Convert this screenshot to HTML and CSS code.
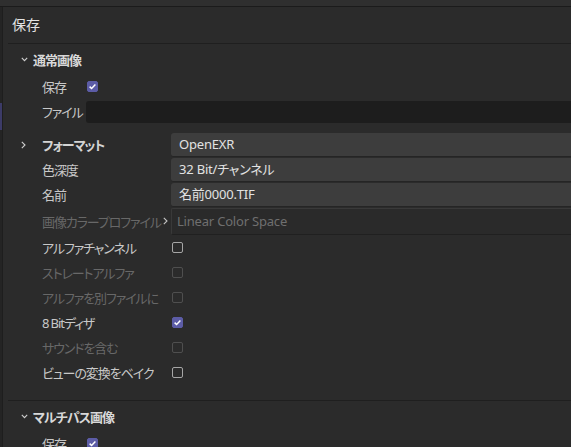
FILE: index.html
```html
<!DOCTYPE html>
<html lang="ja">
<head>
<meta charset="utf-8">
<title>保存</title>
<link rel="stylesheet" href="styles.css">
</head>
<body>
<div class="top"></div>
<div class="main">
  <div class="rail"><div class="rail-mark"></div></div>
  <div class="panel">
    <div class="title">保存</div>

    <section class="group">
      <div class="ghead">
        <svg class="chev-down" width="7" height="5" viewBox="0 0 7 5"><polyline points="0.8,0.8 3.5,3.6 6.2,0.8" fill="none" stroke="#cfcfcf" stroke-width="1.1"/></svg>
        <span>通常画像</span>
      </div>
      <div class="rows narrow">
        <div class="row"><span class="ind"></span><span class="label">保存</span><span class="cb on"><svg width="11" height="11" viewBox="0 0 11 11"><polyline points="2.6,5.6 4.6,7.5 8.4,3.6" fill="none" stroke="#fff" stroke-width="1.5"/></svg></span></div>
        <div class="row"><span class="ind"></span><span class="label">ファイル</span><span class="input"></span></div>
      </div>
      <div class="rows wide">
        <div class="row"><span class="ind"><svg width="5" height="8" viewBox="0 0 5 8"><polyline points="0.8,0.8 4,4 0.8,7.2" fill="none" stroke="#d0d0d0" stroke-width="1.1"/></svg></span><span class="label strong">フォーマット</span><span class="field">OpenEXR</span></div>
        <div class="row"><span class="ind"></span><span class="label">色深度</span><span class="field">32 Bit/チャンネル</span></div>
        <div class="row"><span class="ind"></span><span class="label">名前</span><span class="field">名前0000.TIF</span></div>
        <div class="row tall"><span class="ind"></span><span class="label dis">画像カラープロファイル<svg class="tick" width="5" height="8" viewBox="0 0 5 8"><polyline points="0.8,0.8 4,4 0.8,7.2" fill="none" stroke="#c4c4c4" stroke-width="1.1"/></svg></span><span class="field ghost">Linear Color Space</span></div>
        <div class="row"><span class="ind"></span><span class="label">アルファチャンネル</span><span class="cb"></span></div>
        <div class="row"><span class="ind"></span><span class="label dis">ストレートアルファ</span><span class="cb dis"></span></div>
        <div class="row"><span class="ind"></span><span class="label dis">アルファを別ファイルに</span><span class="cb dis"></span></div>
        <div class="row"><span class="ind"></span><span class="label">8 Bitディザ</span><span class="cb on"><svg width="11" height="11" viewBox="0 0 11 11"><polyline points="2.6,5.6 4.6,7.5 8.4,3.6" fill="none" stroke="#fff" stroke-width="1.5"/></svg></span></div>
        <div class="row"><span class="ind"></span><span class="label dis">サウンドを含む</span><span class="cb dis"></span></div>
        <div class="row"><span class="ind"></span><span class="label">ビューの変換をベイク</span><span class="cb"></span></div>
      </div>
    </section>

    <section class="group">
      <div class="ghead">
        <svg class="chev-down" width="7" height="5" viewBox="0 0 7 5"><polyline points="0.8,0.8 3.5,3.6 6.2,0.8" fill="none" stroke="#cfcfcf" stroke-width="1.1"/></svg>
        <span>マルチパス画像</span>
      </div>
      <div class="rows narrow">
        <div class="row"><span class="ind"></span><span class="label">保存</span><span class="cb on"><svg width="11" height="11" viewBox="0 0 11 11"><polyline points="2.6,5.6 4.6,7.5 8.4,3.6" fill="none" stroke="#fff" stroke-width="1.5"/></svg></span></div>
      </div>
    </section>
  </div>
</div>
</body>
</html>
```

FILE: styles.css
```css
html, body {
  margin: 0;
  padding: 0;
}
body {
  width: 571px;
  height: 447px;
  overflow: hidden;
  background: #2b2b2b;
  color: #c8c8c8;
  font-family: "Noto Sans", "Noto Sans CJK JP", sans-serif;
  font-size: 13px;
  font-feature-settings: "palt";
}
.top {
  height: 6px;
  background: #2f2f2f;
  border-bottom: 1px solid #1b1b1b;
}
.main {
  display: flex;
  height: 440px;
  overflow: hidden;
}
.rail {
  width: 2px;
  background: #242424;
  border-right: 1px solid #1e1e1e;
  position: relative;
  flex: none;
}
.rail-mark {
  position: absolute;
  left: 0;
  top: 96px;
  width: 2px;
  height: 27px;
  background: #3c3b68;
}
.panel {
  flex: 1;
  margin-left: 5px;
  min-width: 0;
}
.title {
  height: 36px;
  line-height: 36px;
  padding-left: 4px;
  font-size: 14px;
  color: #e4e4e4;
}
.group {
  border-top: 1px solid #1f1f1f;
  padding-bottom: 15px;
}
.ghead {
  height: 30px;
  display: flex;
  align-items: center;
  padding-left: 13px;
  font-weight: bold;
  color: #d8d8d8;
  letter-spacing: -1px;
}
.chev-down {
  margin-right: 5px;
  margin-top: 1px;
}
.rows {
  display: flex;
  flex-direction: column;
}
.wide {
  margin-top: 8px;
}
.row {
  height: 25px;
  display: flex;
  align-items: center;
}
.row.tall {
  height: 28px;
}
.ind {
  width: 34px;
  flex: none;
  display: flex;
  padding-left: 13px;
  box-sizing: border-box;
}
.label {
  flex: none;
  white-space: nowrap;
  display: flex;
  align-items: center;
  letter-spacing: -1.1px;
}
.narrow .label { width: 44px; }
.wide .label { width: 129px; }
.label.strong {
  font-weight: bold;
  color: #d4d4d4;
}
.label.dis { color: #686868; }
.tick {
  margin-left: auto;
  margin-right: 3px;
}
.cb {
  width: 9px;
  height: 9px;
  margin-left: 1px;
  border: 1.5px solid #a6a6a6;
  border-radius: 2px;
  flex: none;
  position: relative;
}
.cb.dis { border-color: #4f4f4f; }
.cb.on {
  background: #5c5ca6;
  border-color: #5c5ca6;
}
.cb.on svg {
  position: absolute;
  left: -1px;
  top: -1px;
}
.input {
  flex: 1;
  height: 22px;
  background: #1d1d1d;
  border-radius: 3px 0 0 3px;
}
.field {
  flex: 1;
  height: 23px;
  line-height: 23px;
  background: #3d3d3d;
  border-bottom: 1px solid #252525;
  border-radius: 3px 0 0 3px;
  padding-left: 8px;
  color: #e2e2e2;
  white-space: nowrap;
  letter-spacing: -0.2px;
}
.field.ghost {
  height: 25px;
  line-height: 25px;
  background: #2a2a2a;
  border: 1px solid #393939;
  border-bottom-color: #202020;
  border-right: none;
  border-radius: 2px 0 0 2px;
  padding-left: 5px;
  color: #6f6f6f;
}
```
